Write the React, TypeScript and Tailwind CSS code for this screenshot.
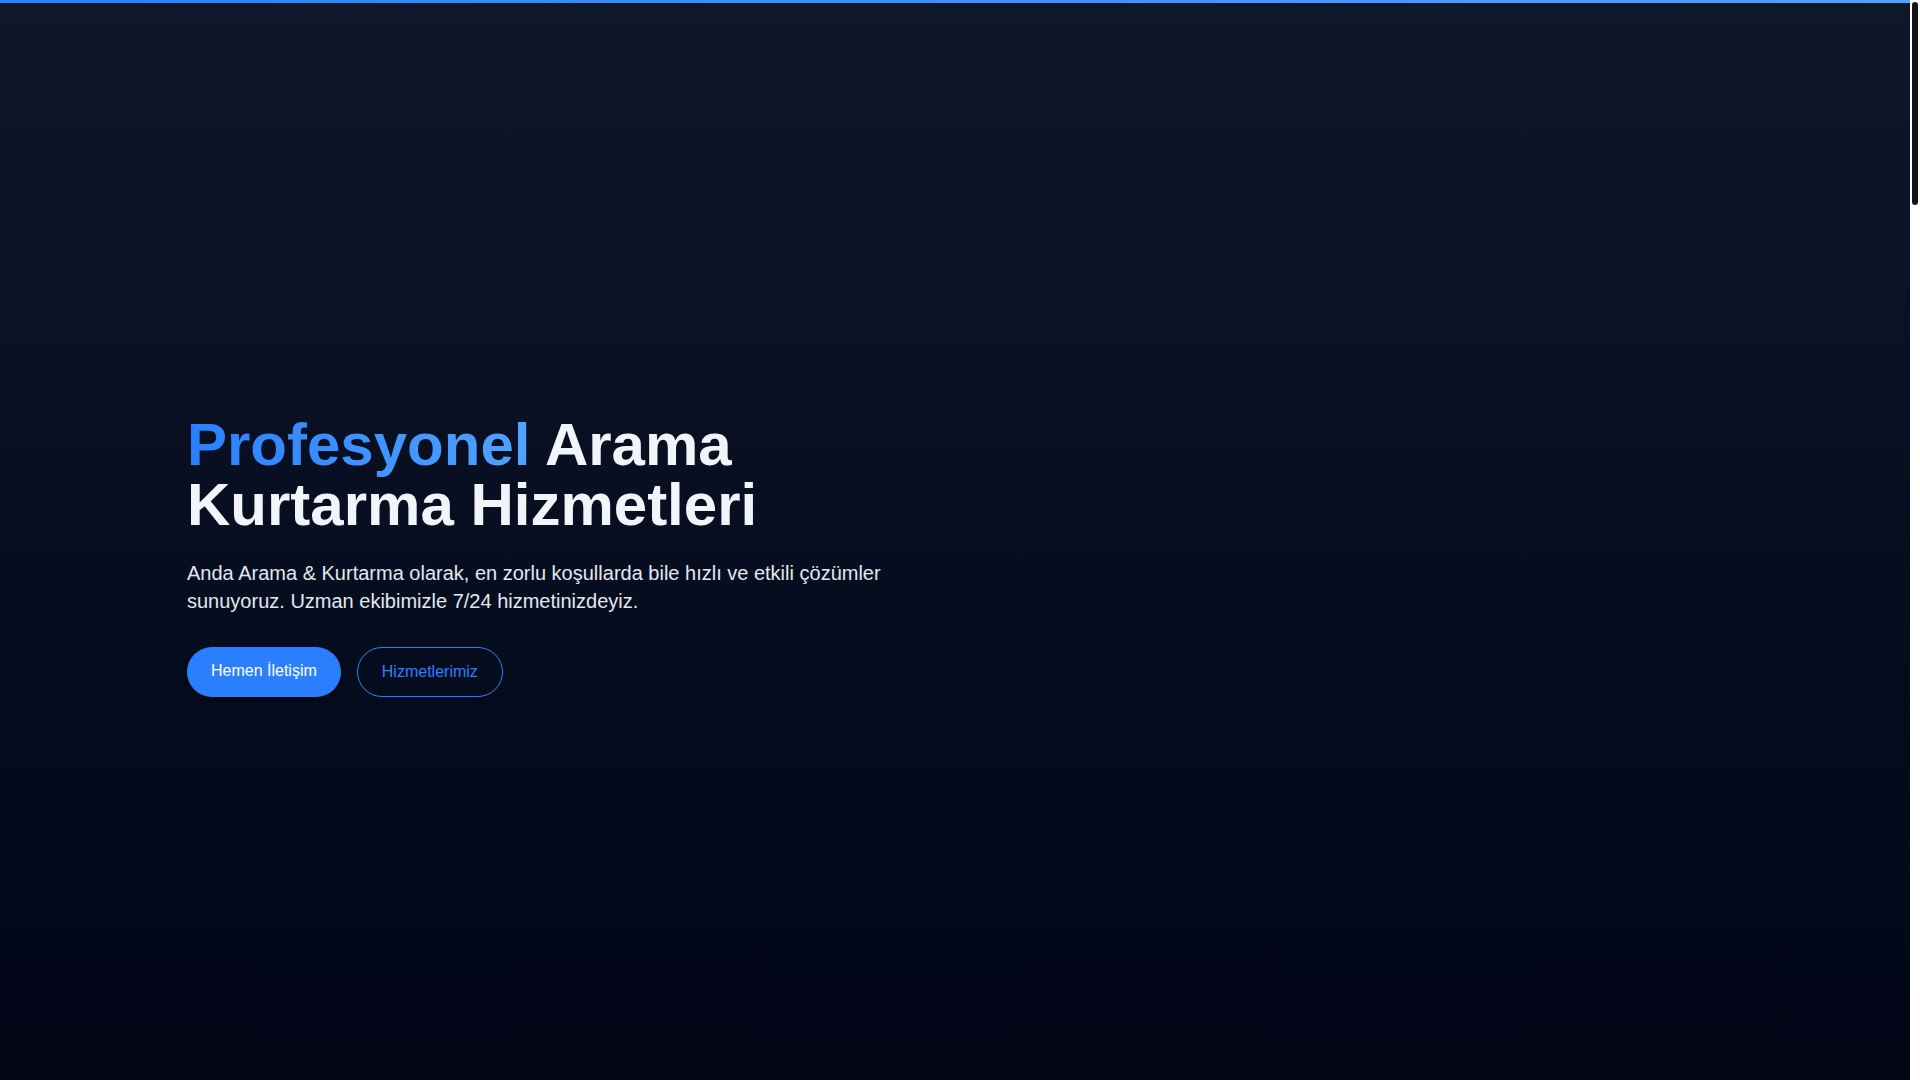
const SERVICES = [
  { title: 'Arama Kurtarma', text: 'Doğal afetlerde ve acil durumlarda profesyonel arama kurtarma desteği.' },
  { title: 'Dağ Kurtarma', text: 'Zorlu arazi ve yüksek irtifa koşullarında deneyimli ekiplerle müdahale.' },
  { title: 'Su Kurtarma', text: 'Deniz, göl ve akarsularda güvenli ve hızlı kurtarma operasyonları.' },
  { title: 'Eğitim', text: 'Kurumlar ve bireyler için ilk yardım ve afet bilinci eğitimleri.' },
];

function Section({ id, title, children }: { id: string; title: string; children: React.ReactNode }) {
  return (
    <section id={id} className="min-h-screen bg-[#020617] py-24">
      <div className="mx-auto max-w-[1536px]">
        <h2 className="mb-12 text-4xl font-bold text-slate-100">{title}</h2>
        {children}
      </div>
    </section>
  );
}

// thin page scrollbar, as the browser draws it in the reference
function ScrollRail() {
  return (
    <div className="fixed top-0 right-0 z-50 h-screen w-[10px] bg-white px-[2px] pt-[2px]">
      <div className="h-[203px] w-full rounded-full bg-[#141414]" />
    </div>
  );
}

export default function App() {
  return (
    <div className="bg-[#020617] pr-[10px] font-['Liberation_Sans',Arial,sans-serif]">
      {/* top accent bar */}
      <div className="fixed top-0 left-0 right-[10px] z-50 h-[3px] bg-gradient-to-r from-blue-500 to-blue-400" />
      <ScrollRail />

      <section className="flex min-h-screen items-center bg-gradient-to-b from-[#0f172a] to-[#020617] pt-[31px]">
        <div className="mx-auto grid w-full max-w-[1536px] grid-cols-2 gap-12">
          <div>
            <h1 className="text-6xl leading-none font-bold text-slate-100">
              <span className="bg-gradient-to-r from-blue-500 to-blue-400 bg-clip-text text-transparent">Profesyonel</span>{' '}
              Arama Kurtarma Hizmetleri
            </h1>
            <p className="mt-6 text-xl leading-7 text-slate-200">
              Anda Arama &amp; Kurtarma olarak, en zorlu koşullarda bile hızlı ve etkili çözümler sunuyoruz. Uzman
              ekibimizle 7/24 hizmetinizdeyiz.
            </p>
            <div className="mt-8 flex gap-4">
              <a
                href="#iletisim"
                className="rounded-full bg-blue-500 px-6 pt-3 pb-[14px] text-base leading-6 text-white shadow-md shadow-black/30"
              >
                Hemen İletişim
              </a>
              <a
                href="#hizmetler"
                className="rounded-full border border-blue-500 px-6 py-3 text-base leading-6 text-blue-500"
              >
                Hizmetlerimiz
              </a>
            </div>
          </div>
          <div />
        </div>
      </section>

      <Section id="hizmetler" title="Hizmetlerimiz">
        <div className="grid grid-cols-4 gap-6">
          {SERVICES.map((s) => (
            <div key={s.title} className="rounded-2xl border border-white/10 bg-white/[0.03] p-8">
              <h3 className="mb-3 text-xl font-semibold text-slate-100">{s.title}</h3>
              <p className="text-slate-400">{s.text}</p>
            </div>
          ))}
        </div>
      </Section>

      <Section id="hakkimizda" title="Hakkımızda">
        <p className="max-w-3xl text-lg leading-7 text-slate-300">
          Anda Arama &amp; Kurtarma, alanında deneyimli gönüllü ve profesyonel ekipleriyle her türlü acil durumda yanınızda.
        </p>
      </Section>

      <Section id="ekipman" title="Ekipmanlarımız">
        <p className="max-w-3xl text-lg leading-7 text-slate-300">
          Modern arama ve kurtarma ekipmanlarıyla her koşulda operasyona hazırız.
        </p>
      </Section>

      <Section id="iletisim" title="İletişim">
        <p className="max-w-3xl text-lg leading-7 text-slate-300">7/24 ulaşabilirsiniz.</p>
      </Section>

      <footer className="h-[300px] border-t border-white/10 bg-[#020617] py-12">
        <div className="mx-auto max-w-[1536px] text-sm text-slate-500">© Anda Arama &amp; Kurtarma</div>
      </footer>
    </div>
  );
}
